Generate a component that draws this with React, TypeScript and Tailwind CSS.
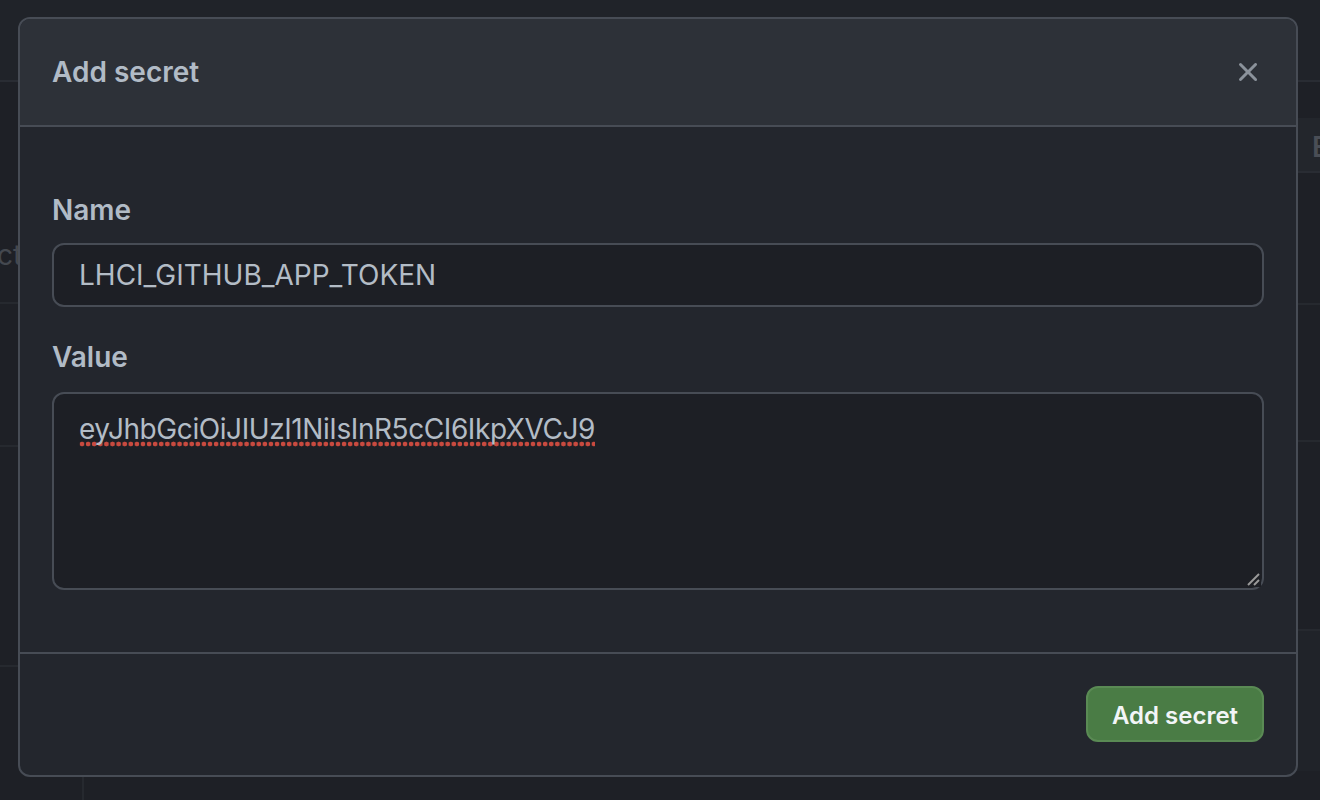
import React from "react";

function XIcon() {
  return (
    <svg width="32" height="32" viewBox="0 0 16 16" fill="#8b929b" aria-hidden="true">
      <path d="M3.72 3.72a.75.75 0 0 1 1.06 0L8 6.94l3.22-3.22a.749.749 0 0 1 1.275.326.749.749 0 0 1-.215.734L9.06 8l3.22 3.22a.749.749 0 0 1-.326 1.275.749.749 0 0 1-.734-.215L8 9.06l-3.22 3.22a.751.751 0 0 1-1.042-.018.751.751 0 0 1-.018-1.042L6.94 8 3.72 4.78a.75.75 0 0 1 0-1.06Z" />
    </svg>
  );
}

function Background() {
  return (
    <div className="flex h-full w-full flex-col bg-[#1e2026]">
      <div className="h-[82px] shrink-0 border-b-2 border-[#292c33] bg-[#202329]" />
      <div className="flex flex-1">
        <div className="flex w-[84px] shrink-0 flex-col overflow-hidden border-r-2 border-[#26292f]">
          <div className="flex h-[222px] items-center border-b-2 border-[#26292f] pt-[126px]">
            <span className="-ml-[3px] whitespace-nowrap text-[28px] text-[#44484f]">ct</span>
          </div>
          <div className="h-[143px] border-b-2 border-[#26292f]" />
          <div className="h-[220px] border-b-2 border-[#26292f]" />
          <div className="flex-1" />
        </div>
        <div className="flex flex-1 flex-col pt-[36px]">
          <div className="flex h-[55px] items-center justify-end border-b-2 border-[#292c33] bg-[#23262c] pt-[4px]">
            <span className="w-[8px] overflow-hidden text-[28px] font-semibold text-[#4a4e56]">E</span>
          </div>
          <div className="h-[132px] border-b-2 border-[#26292f]" />
          <div className="h-[137px] border-b-2 border-[#26292f]" />
          <div className="h-[189px] border-b-2 border-[#26292f]" />
          <div className="h-[140px] bg-[#202329]" />
          <div className="flex-1" />
        </div>
      </div>
    </div>
  );
}

export default function App() {
  return (
    <div className="relative h-[800px] w-[1320px] overflow-hidden font-[Inter,'Liberation_Sans',sans-serif]">
      <Background />
      <div className="absolute left-[18px] top-[17px] flex h-[760px] w-[1280px] flex-col overflow-hidden rounded-[12px] border-2 border-[#474c55] bg-[#23262d]">
        <div className="flex h-[108px] shrink-0 items-center justify-between border-b-2 border-[#474c55] bg-[#2d3138] pl-[32px] pr-[20px]">
          <h1 className="text-[28px] font-semibold leading-[42px] text-[#b1bbc6]">Add secret</h1>
          <button className="flex h-[56px] w-[56px] items-center justify-center">
            <XIcon />
          </button>
        </div>
        <div className="flex shrink-0 flex-col px-[32px] pb-[62px] pt-[62px]">
          <label className="text-[28px] font-semibold leading-[42px] text-[#b1bbc6]">Name</label>
          <div className="mt-[12px] flex h-[64px] items-center rounded-[12px] border-2 border-[#474c55] bg-[#1d1f25] pl-[25px]">
            <span className="text-[28px] leading-[42px] text-[#b3bcc6]">LHCI_GITHUB_APP_TOKEN</span>
          </div>
          <label className="mt-[29px] text-[28px] font-semibold leading-[42px] text-[#b1bbc6]">Value</label>
          <div className="relative mt-[14px] h-[198px] rounded-[12px] border-2 border-[#474c55] bg-[#1d1f25] pl-[25px] pt-[14px]">
            <span className="inline-block bg-[radial-gradient(circle,#c94a3f_0,#c94a3f_2.1px,transparent_2.7px)] bg-[length:6.1px_6px] bg-[position:0_33px] bg-repeat-x text-[28px] leading-[42px] tracking-[-0.42px] text-[#b3bcc6]">
              eyJhbGciOiJIUzI1NiIsInR5cCI6IkpXVCJ9
            </span>
            <svg className="absolute bottom-[1px] right-[1px]" width="18" height="18" viewBox="0 0 18 18" aria-hidden="true">
              <rect x="0" y="0" width="18" height="18" fill="#1d1f25" />
              <line x1="5" y1="16" x2="16" y2="5" stroke="#9a9a9a" strokeWidth="2" />
              <line x1="11" y1="16" x2="16" y2="11" stroke="#9a9a9a" strokeWidth="2" />
            </svg>
          </div>
        </div>
        <div className="flex flex-1 items-start justify-end border-t-2 border-[#474c55] px-[32px] pt-[32px]">
          <button className="flex h-[56px] w-[178px] items-center justify-center rounded-[12px] border-2 border-[#5a8a54] bg-[#4a7c45] pt-[3px] text-[24px] font-semibold text-[#f2f5f7]">
            Add secret
          </button>
        </div>
      </div>
    </div>
  );
}
